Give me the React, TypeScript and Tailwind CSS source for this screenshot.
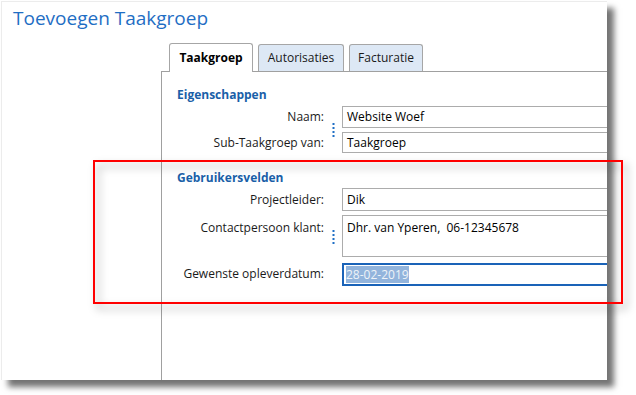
const dots = (
  <svg width="3" height="14" viewBox="0 0 3 14" className="block">
    <rect x="0.5" y="0" width="2" height="2" fill="#1f6fc5" />
    <rect x="0.5" y="4" width="2" height="2" fill="#1f6fc5" />
    <rect x="0.5" y="8" width="2" height="2" fill="#1f6fc5" />
    <rect x="0.5" y="12" width="2" height="2" fill="#1f6fc5" />
  </svg>
);

function Label({ children, top }: { children: React.ReactNode; top?: boolean }) {
  return (
    <div
      className={`flex justify-end whitespace-nowrap pr-[1px] text-[#1a1a1a] ${
        top ? "items-start pt-[4px]" : "items-center"
      }`}
    >
      {children}
    </div>
  );
}

export default function App() {
  return (
    <div className="relative w-[636px] h-[395px] bg-white overflow-hidden font-['Open_Sans',sans-serif] text-[12px]">
      {/* screenshot window */}
      <div className="ml-[1px] mt-[1px] w-[606px] h-[379px] bg-white flex flex-col overflow-hidden border-l border-t border-[#ececec] shadow-[7px_7px_6px_rgba(0,0,0,0.55)]">
        <h1 className="pl-[11px] pt-[4px] text-[19px] leading-[25px] text-[#1f6ec4]">
          Toevoegen Taakgroep
        </h1>

        {/* Tabs */}
        <div className="flex items-end gap-[5px] pl-[167px] mt-[12px] relative z-10">
          <div className="w-[84px] h-[29px] -mb-px bg-white border border-b-0 border-[#a6a6a6] rounded-t-[3px] flex items-center justify-center font-bold text-black">
            Taakgroep
          </div>
          <div className="w-[86px] h-[27px] bg-[#dde8f5] border border-b-0 border-[#a6a6a6] rounded-t-[3px] flex items-center justify-center text-[#1a1a1a]">
            Autorisaties
          </div>
          <div className="w-[74px] h-[27px] bg-[#dde8f5] border border-b-0 border-[#a6a6a6] rounded-t-[3px] flex items-center justify-center text-[#1a1a1a]">
            Facturatie
          </div>
        </div>

        {/* Tab panel */}
        <div className="ml-[159px] flex-1 border-l border-t border-[#a0a0a0] pl-[15px] pt-[15px] overflow-hidden">
          <h2 className="font-bold leading-[16px] text-[#1a5fa8]">Eigenschappen</h2>
          <div className="mt-[3px] grid grid-cols-[148px_17px_300px] gap-y-[4px]">
            <Label>Naam:</Label>
            <div className="row-span-2 flex items-center justify-center">{dots}</div>
            <div className="h-[22px] border border-[#acacac] px-[4px] flex items-center text-black">
              Website Woef
            </div>
            <Label>Sub-Taakgroep van:</Label>
            <div className="h-[21px] border border-[#acacac] px-[4px] flex items-center text-black">
              Taakgroep
            </div>
          </div>

          <h2 className="mt-[17px] font-bold leading-[16px] text-[#1a5fa8]">Gebruikersvelden</h2>
          <div className="mt-[2px] grid grid-cols-[148px_17px_300px] gap-y-[4px]">
            <Label>Projectleider:</Label>
            <div className="row-span-3 flex items-center justify-center">{dots}</div>
            <div className="h-[23px] border border-[#acacac] px-[4px] flex items-center text-black">
              Dik
            </div>
            <Label top>Contactpersoon klant:</Label>
            <div className="h-[42px] border border-[#acacac] px-[4px] pt-[3px] leading-[18px] text-black whitespace-pre">
              {"Dhr. van Yperen,  06-12345678"}
            </div>
            <Label>Gewenste opleverdatum:</Label>
            <div className="mt-[2px] h-[23px] border-2 border-[#1a63b8] px-[2px] flex items-center">
              <span className="bg-[#92b4dc] text-[#eef3f8] leading-[17px]">28-02-2019</span>
            </div>
          </div>
        </div>
      </div>

      {/* red annotation frame */}
      <div className="absolute left-[93px] top-[160px] w-[530px] h-[144px] border-2 border-[#ff0000] drop-shadow-[4px_5px_4px_rgba(0,0,0,0.35)]" />
    </div>
  );
}
